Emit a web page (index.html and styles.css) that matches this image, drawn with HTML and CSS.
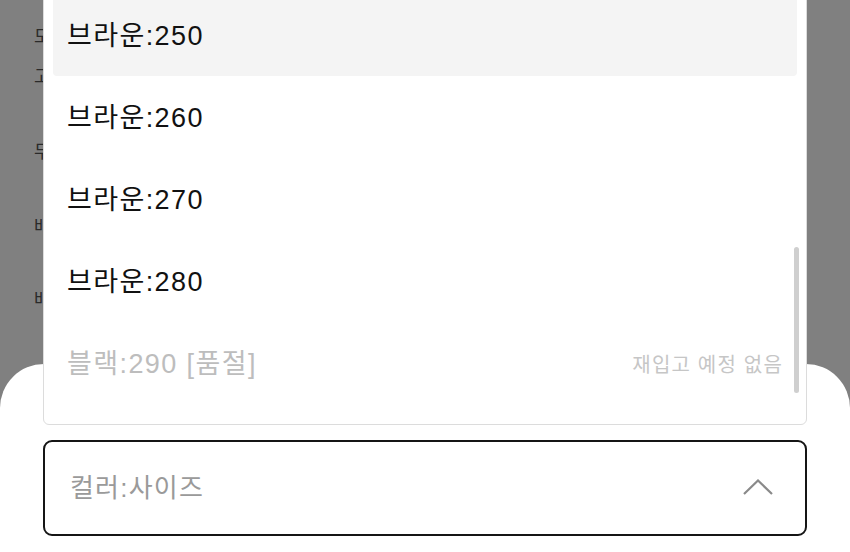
FILE: index.html
```html
<!DOCTYPE html>
<html lang="ko">
<head>
<meta charset="utf-8">
<link rel="stylesheet" href="styles.css">
</head>
<body>
<div class="page">
  <div class="bg-lines">
    <p class="bg-line l1">모</p>
    <p class="bg-line l2">고</p>
    <p class="bg-line l3">무</p>
    <p class="bg-line l4">배</p>
    <p class="bg-line l5">배</p>
  </div>
</div>
<div class="sheet">
  <div class="field">
    <div class="panel">
      <ul class="list">
        <li class="item active"><span>브라운:250</span></li>
        <li class="item"><span>브라운:260</span></li>
        <li class="item"><span>브라운:270</span></li>
        <li class="item"><span>브라운:280</span></li>
        <li class="item disabled"><span>블랙:290 [품절]</span><span class="note">재입고 예정 없음</span></li>
      </ul>
      <div class="scrollbar"></div>
    </div>
    <div class="select">
      <span class="placeholder">컬러:사이즈</span>
      <svg class="chev" width="30" height="16" viewBox="0 0 30 16"><polyline points="1,15 15,1.5 29,15" fill="none" stroke="#8a8a8a" stroke-width="2.2"/></svg>
    </div>
  </div>
</div>
</body>
</html>
```

FILE: styles.css
```css
html, body {
  margin: 0;
  padding: 0;
  width: 850px;
  height: 552px;
  overflow: hidden;
  background: #808080;
  font-family: "Liberation Sans", "Noto Sans CJK KR", sans-serif;
}
.page {
  padding: 0 0 0 34px;
}
.bg-lines {
  display: flex;
  flex-direction: column;
}
.bg-line {
  margin: 0;
  font-family: "Noto Sans CJK KR", sans-serif;
  font-size: 18px;
  line-height: 20px;
  color: #2a2a2a;
  white-space: nowrap;
}
.l1 { margin-top: 25px; }
.l2 { margin-top: 20px; }
.l3 { margin-top: 55px; }
.l4 { margin-top: 55px; }
.l5 { margin-top: 53px; }

.sheet {
  position: absolute;
  left: 0;
  right: 0;
  top: 364px;
  bottom: 0;
  background: #fff;
  border-radius: 44px 44px 0 0;
  padding: 76px 43px 0;
}
.field {
  position: relative;
}
.panel {
  position: absolute;
  left: 0;
  right: 0;
  bottom: calc(100% + 15px);
  background: #fff;
  border: 1px solid #dcdcdc;
  border-radius: 6px;
  padding: 9px 9px 20px;
}
.list {
  list-style: none;
  margin: 0;
  padding: 0;
}
.item {
  height: 82px;
  display: flex;
  align-items: center;
  justify-content: space-between;
  padding: 0 14px;
  font-size: 27px;
  letter-spacing: 1.4px;
  color: #111;
  border-radius: 4px;
}
.item span {
  margin-top: -4px;
}
.item.active {
  background: #f4f4f4;
}
.item.disabled {
  color: #bdbdbd;
}
.item .note {
  font-size: 20px;
  letter-spacing: 1.2px;
  color: #c6c6c6;
  margin-top: 1px;
}
.scrollbar {
  position: absolute;
  right: 7px;
  top: 262px;
  width: 5px;
  height: 146px;
  background: #cfcfcf;
  border-radius: 3px;
}
.select {
  height: 96px;
  box-sizing: border-box;
  border: 2px solid #151515;
  border-radius: 9px;
  display: flex;
  align-items: center;
  justify-content: space-between;
  padding: 0 32px 0 25px;
}
.placeholder {
  font-size: 26px;
  letter-spacing: 1.2px;
  color: #9a9a9a;
  margin-top: -5px;
}
.chev {
  display: block;
  margin-top: -2px;
}
```
